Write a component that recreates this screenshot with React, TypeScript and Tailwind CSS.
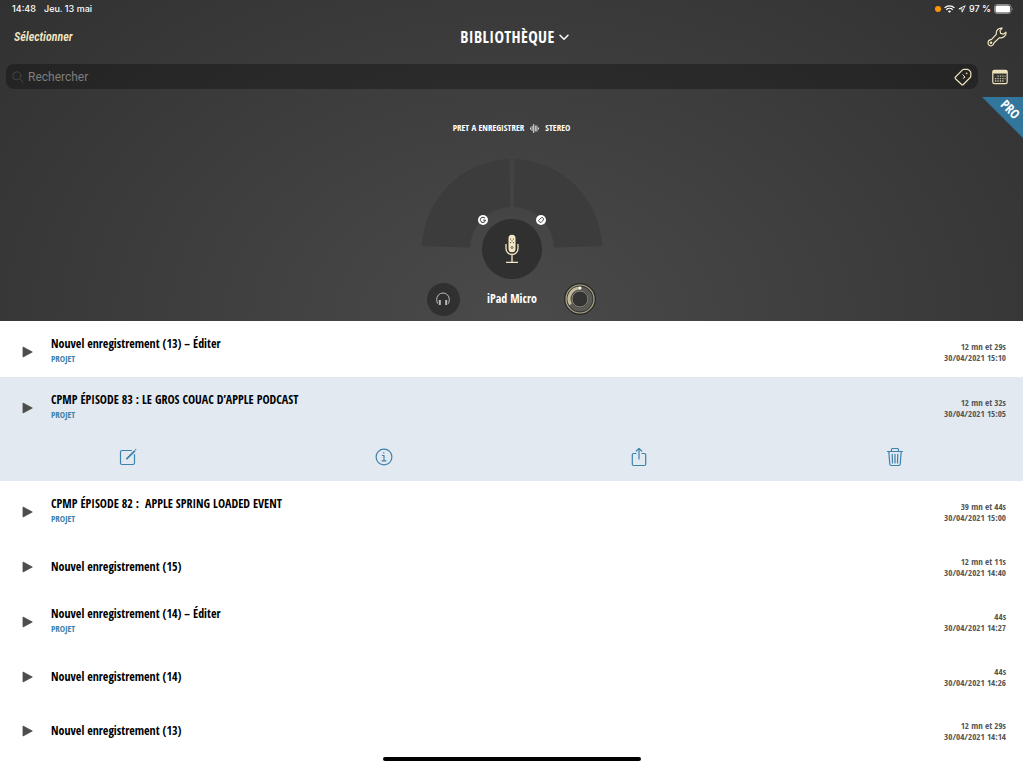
import { useState } from "react";
import type { ReactNode } from "react";

type Recording = {
  id: number;
  title: string;
  project: boolean;
  duration: string;
  date: string;
};

const recordings: Recording[] = [
  { id: 1, title: "Nouvel enregistrement (13) – Éditer", project: true, duration: "12 mn et 29s", date: "30/04/2021 15:10" },
  { id: 2, title: "CPMP ÉPISODE 83 : LE GROS COUAC D’APPLE PODCAST", project: true, duration: "12 mn et 32s", date: "30/04/2021 15:05" },
  { id: 3, title: "CPMP ÉPISODE 82 :  APPLE SPRING LOADED EVENT", project: true, duration: "39 mn et 44s", date: "30/04/2021 15:00" },
  { id: 4, title: "Nouvel enregistrement (15)", project: false, duration: "12 mn et 11s", date: "30/04/2021 14:40" },
  { id: 5, title: "Nouvel enregistrement (14) – Éditer", project: true, duration: "44s", date: "30/04/2021 14:27" },
  { id: 6, title: "Nouvel enregistrement (14)", project: false, duration: "44s", date: "30/04/2021 14:26" },
  { id: 7, title: "Nouvel enregistrement (13)", project: false, duration: "12 mn et 29s", date: "30/04/2021 14:14" },
];

function StatusBar() {
  return (
    <div className="flex h-[18px] items-center justify-between pl-3 pr-2.5 font-['Inter',sans-serif] text-[9px] font-medium text-white">
      <div className="flex gap-2">
        <span>14:48</span>
        <span>Jeu. 13 mai</span>
      </div>
      <div className="flex items-center gap-[3px]">
        <span className="size-1.5 rounded-full bg-[#ff9500]" />
        <svg width="11" height="8" viewBox="0 0 11 8" fill="none" stroke="white" strokeWidth="1.3" aria-hidden="true">
          <path d="M.6 2.9a7 7 0 0 1 9.8 0M2.3 4.7a4.6 4.6 0 0 1 6.4 0" />
          <path d="M5.5 7.8 3.9 6.2a2.3 2.3 0 0 1 3.2 0z" fill="white" stroke="none" />
        </svg>
        <svg width="8" height="8" viewBox="0 0 8 8" fill="none" stroke="white" strokeWidth=".9" strokeLinejoin="round" aria-hidden="true">
          <path d="M7.2.8.9 3.8h3.2v3.3z" />
        </svg>
        <span>97 %</span>
        <svg width="19" height="10" viewBox="0 0 19 10" aria-hidden="true">
          <rect x=".5" y=".5" width="16.5" height="9" rx="2.6" fill="none" stroke="#8a8a8a" />
          <rect x="1.5" y="1.5" width="14.5" height="7" rx="1.6" fill="white" />
          <path d="M17.8 3.400c1.100.300 1.100 2.900 0 3.200z" fill="#8a8a8a" />
        </svg>
      </div>
    </div>
  );
}

function WrenchIcon() {
  return (
    <svg width="20" height="20" viewBox="0 0 20 20" fill="none" stroke="#efe3bb" strokeWidth="1.2" strokeLinejoin="round" strokeLinecap="round" aria-hidden="true">
      <path d="M18.900 5.200 16.400 7.200 13.600 6.400 13 3.600 15.200 1.200C11.800.600 8.600 3.400 9.400 7.200L4.600 12.400C2.400 12.800.900 14.400 1.100 16.300 1.400 18.400 3.200 19.200 4.700 18.700 6 18.300 6.800 17.200 7 15.800L12.600 10.600C16.200 11.600 19.600 8.600 18.900 5.200z" />
      <circle cx="4" cy="15.800" r=".7" />
    </svg>
  );
}

function TagIcon() {
  return (
    <svg width="18" height="18" viewBox="0 0 18 18" fill="none" stroke="#efe3bb" strokeWidth="1.2" strokeLinejoin="round" strokeLinecap="round" aria-hidden="true">
      <path d="M10 1.300h3.300c.6 0 1.100.2 1.500.6l1.400 1.500c.4.400.6.900.6 1.500V8c0 .6-.2 1.100-.6 1.500l-6.900 7c-.5.500-1.200.5-1.700 0L1.500 10.700c-.5-.5-.5-1.200 0-1.700l7-7.100c.4-.4.900-.6 1.500-.6z" />
      <path d="m8.800 6.800 2.200 2.300-1.800 1.200" strokeWidth="1" />
      <circle cx="12.500" cy="5.300" r=".4" fill="#efe3bb" strokeWidth=".8" />
    </svg>
  );
}

function CalendarIcon() {
  return (
    <svg width="16" height="16" viewBox="0 0 16 16" aria-hidden="true">
      <rect x=".8" y="1.300" width="14.400" height="13.400" rx="1.600" fill="none" stroke="#efe3bb" strokeWidth="1.200" />
      <path d="M.8 2.500c0-.8.600-1.500 1.500-1.500h11.400c.9 0 1.500.7 1.500 1.500v2H.8z" fill="#efe3bb" />
      <path d="M5.500 7.200h8M3 9.600h10.500M3 12h8.500" stroke="#c9c1a2" strokeWidth="1.300" strokeDasharray="1.300 1.100" />
    </svg>
  );
}

function Meter() {
  return (
    <div className="relative grid">
      <svg className="[grid-area:1/1]" width="180" height="120" viewBox="0 0 180 120" aria-hidden="true">
        <path d="M.1 86.900A90 90 0 0 1 86.900.1L88.500 48A42 42 0 0 0 48 88.500z" fill="#3c3c3c" />
        <path d="M179.900 86.900A90 90 0 0 0 93.100.1L91.500 48A42 42 0 0 1 132 88.500z" fill="#3c3c3c" />
      </svg>
      <button
        type="button"
        aria-label="Enregistrer"
        className="flex size-15 items-center justify-center self-end justify-self-center rounded-full bg-[#303030] [grid-area:1/1]"
      >
        <svg width="14" height="30" viewBox="0 0 14 30" fill="none" stroke="#f3e8c3" strokeWidth="1.300" aria-hidden="true">
          <rect x="3.500" y=".7" width="7" height="17.600" rx="3.500" fill="#f3e8c3" stroke="none" />
          <path d="M1 10v4.500a6 6 0 0 0 12 0V10M7 20.500V28M1 28.400h12" />
          <g fill="#4a463c" stroke="none">
            <circle cx="5.600" cy="5" r=".6" /><circle cx="8.400" cy="5" r=".6" /><circle cx="7" cy="6.800" r=".6" />
            <circle cx="5.600" cy="8.600" r=".6" /><circle cx="8.400" cy="8.600" r=".6" />
          </g>
          <circle cx="7" cy="13.500" r="1" stroke="#4a463c" strokeWidth=".8" />
        </svg>
      </button>
      <svg className="absolute left-[56px] top-[56px]" width="10" height="10" viewBox="0 0 10 10" aria-hidden="true">
        <circle cx="5" cy="5" r="5" fill="white" />
        <path d="M7 3.300A2.600 2.600 0 1 0 7.500 5.200H5.200" fill="none" stroke="#333" strokeWidth="1" />
      </svg>
      <svg className="absolute right-[56px] top-[56px]" width="10" height="10" viewBox="0 0 10 10" aria-hidden="true">
        <circle cx="5" cy="5" r="5" fill="white" />
        <path d="M2.500 5.600 5.300 2.700C6.600 2 8 3.400 7.300 4.900 6.600 6.400 5 7.700 3.900 7.300z" fill="none" stroke="#333" strokeWidth=".9" strokeLinejoin="round" />
      </svg>
    </div>
  );
}

function Recorder() {
  return (
    <section className="relative flex flex-col items-center pb-[5px] pt-[23px]">
      <div className="absolute right-0 top-0 flex h-[41px] w-[41px] items-center justify-center bg-[#33769c] [clip-path:polygon(0_0,100%_0,100%_100%)]">
        <span className="-translate-y-2 translate-x-2 rotate-45 text-[13px] font-semibold leading-none text-white">PRO</span>
      </div>
      <div className="flex items-center gap-1.5 text-[9px] font-semibold leading-4 text-white">
        <span>PRET A ENREGISTRER</span>
        <svg width="9" height="9" viewBox="0 0 9 9" stroke="#ddd" strokeWidth="1" aria-hidden="true">
          <path d="M.5 3.500v2M2.100 2v5M3.700 0v9M5.300 1.500v6M6.900 1.500v6M8.500 3.500v2" />
        </svg>
        <span>STEREO</span>
      </div>
      <div className="mt-[23px]">
        <Meter />
      </div>
      <div className="mt-[3px] flex h-[34px] w-[170px] items-center justify-between">
        <button type="button" aria-label="Écoute au casque" className="flex size-[33px] items-center justify-center rounded-full bg-[#303030]">
          <svg width="14" height="14" viewBox="0 0 14 14" fill="none" stroke="#bcbcbc" aria-hidden="true">
            <path d="M1.500 11.500C.8 9.800.7 8.500.7 7.300a6.300 6.300 0 0 1 12.600 0c0 1.200-.1 2.500-.8 4.200" />
            <path d="M3.800 8v5M10.200 8v5" strokeWidth="2" />
          </svg>
        </button>
        <button type="button" className="text-[12px] font-bold text-white">iPad Micro</button>
        <button type="button" aria-label="Gain" className="rounded-full">
          <svg width="32" height="32" viewBox="0 0 32 32" fill="none" aria-hidden="true">
            <circle cx="16" cy="16" r="15.500" fill="#3a3935" stroke="#26251f" />
            <circle cx="16" cy="16" r="14" stroke="#aba58d" strokeWidth="1.200" />
            <circle cx="16" cy="16" r="10.500" stroke="#5c5b55" strokeWidth="3.500" />
            <path d="M6.500 21.500A11 11 0 0 1 16 5" stroke="#c3bb9b" strokeWidth="3" />
            <circle cx="16" cy="16" r="8" fill="#343434" stroke="#8f8a76" />
            <circle cx="16" cy="5" r="1.500" fill="white" />
          </svg>
        </button>
      </div>
    </section>
  );
}

function Action({ label, children }: { label: string; children: ReactNode }) {
  return (
    <button type="button" aria-label={label} className="flex flex-1 items-center justify-center">
      <svg width="20" height="20" viewBox="0 0 20 20" fill="none" stroke="#3d82ac" strokeWidth="1.200" strokeLinecap="round" strokeLinejoin="round" aria-hidden="true">
        {children}
      </svg>
    </button>
  );
}

function RowActions() {
  return (
    <div className="flex h-12">
      <Action label="Éditer">
        <path d="M13.500 3.500H4A1.500 1.500 0 0 0 2.500 5v11A1.500 1.500 0 0 0 4 17.500h11a1.500 1.500 0 0 0 1.500-1.500V7.500M8.500 11.700 16.300 3.800M9.100 11.800 16.800 4.200M17.600 2.700l.2-.2" />
      </Action>
      <Action label="Informations">
        <circle cx="10" cy="10" r="7.900" />
        <path d="M8.300 8.500H10v5.300M8 13.800h4M9.800 5.700v.3" />
      </Action>
      <Action label="Partager">
        <path d="M7 6.500H4.500c-.7 0-1.200.5-1.200 1.200v9.600c0 .7.500 1.200 1.200 1.200h11c.7 0 1.200-.5 1.200-1.200V7.700c0-.7-.5-1.200-1.200-1.200H13M10 12V1.500M7.300 4 10 1.300 12.700 4" />
      </Action>
      <Action label="Supprimer">
        <path d="M2.500 4.500h15M6.500 4.300V2.500c0-.6.400-1 1-1h5c.6 0 1 .4 1 1v1.800M3.800 4.700l1 12.500c.1.800.6 1.300 1.300 1.300h7.800c.7 0 1.200-.5 1.300-1.300l1-12.500M7.200 7.300l.3 8.700M10 7.300V16M12.800 7.300l-.3 8.700" />
      </Action>
    </div>
  );
}

function RecordingRow({ recording, selected, onSelect }: { recording: Recording; selected: boolean; onSelect: () => void }) {
  return (
    <li className={selected ? "bg-[#e2e9f0]" : "bg-white"} onClick={onSelect}>
      <div className={`flex items-center pl-[22px] pr-[17px] pt-1.5 ${recording.project ? "h-14" : "h-[54px]"}`}>
        <button type="button" aria-label={`Lire ${recording.title}`} className="mr-[18px]">
          <svg width="11" height="12" viewBox="0 0 11 12" fill="#4d4d4d" aria-hidden="true">
            <path d="M1 1v10l9.300-5z" stroke="#4d4d4d" strokeLinejoin="round" strokeWidth=".8" />
          </svg>
        </button>
        <div className="flex-1">
          <h2 className="whitespace-pre text-[12px] font-semibold leading-3.5 text-black">{recording.title}</h2>
          {recording.project && <p className="text-[9px] font-semibold leading-4 text-[#3d82ac]">PROJET</p>}
        </div>
        <div className="text-right text-[9px] font-semibold leading-[11px] text-[#555]">
          <p>{recording.duration}</p>
          <p>{recording.date}</p>
        </div>
      </div>
      {selected && <RowActions />}
    </li>
  );
}

export default function App() {
  const [selectedId, setSelectedId] = useState(2);
  return (
    <div className="relative flex min-h-screen flex-col bg-white font-['Open_Sans_Condensed','Roboto_Condensed',sans-serif]">
      <header className="bg-[radial-gradient(ellipse_75%_170%_at_50%_100%,#4a4a4a,#2e2e2e)]">
        <StatusBar />
        <nav className="grid h-[38px] grid-cols-[1fr_auto_1fr] items-center pl-3.5 pr-4">
          <button type="button" className="justify-self-start font-['Roboto_Condensed',sans-serif] text-[12px] font-semibold italic text-[#f3e8c3]">Sélectionner</button>
          <button type="button" className="flex items-center gap-1 pl-2 text-[16px] font-semibold tracking-wide text-white">
            <h1>BIBLIOTHÈQUE</h1>
            <svg width="10" height="7" viewBox="0 0 10 7" fill="none" stroke="white" strokeWidth="1.500" strokeLinecap="round" aria-hidden="true">
              <path d="m1 1.200 4 4 4-4" />
            </svg>
          </button>
          <button type="button" aria-label="Réglages" className="justify-self-end">
            <WrenchIcon />
          </button>
        </nav>
        <div className="flex items-center gap-3.5 pb-2 pl-1.5 pr-[15px] pt-2">
          <div className="flex h-[25px] flex-1 items-center gap-1 rounded-lg bg-black/30 pl-1.5 pr-1.5">
            <svg width="12" height="12" viewBox="0 0 12 12" fill="none" stroke="#454545" strokeLinecap="round" aria-hidden="true">
              <circle cx="4.800" cy="4.800" r="4" />
              <path d="m7.800 7.800 3.400 3.400" />
            </svg>
            <input
              type="search"
              aria-label="Rechercher"
              placeholder="Rechercher"
              className="min-w-0 flex-1 bg-transparent font-['Roboto',sans-serif] text-[12px] text-white outline-none placeholder:text-[#7d7d7d]"
            />
            <button type="button" aria-label="Étiquettes">
              <TagIcon />
            </button>
          </div>
          <button type="button" aria-label="Calendrier">
            <CalendarIcon />
          </button>
        </div>
        <Recorder />
      </header>
      <main>
        <ul>
          {recordings.map((recording) => (
            <RecordingRow
              key={recording.id}
              recording={recording}
              selected={recording.id === selectedId}
              onSelect={() => setSelectedId(recording.id)}
            />
          ))}
        </ul>
      </main>
      <div className="absolute bottom-1.5 left-1/2 h-1 w-[258px] -translate-x-1/2 rounded-full bg-black" />
    </div>
  );
}
